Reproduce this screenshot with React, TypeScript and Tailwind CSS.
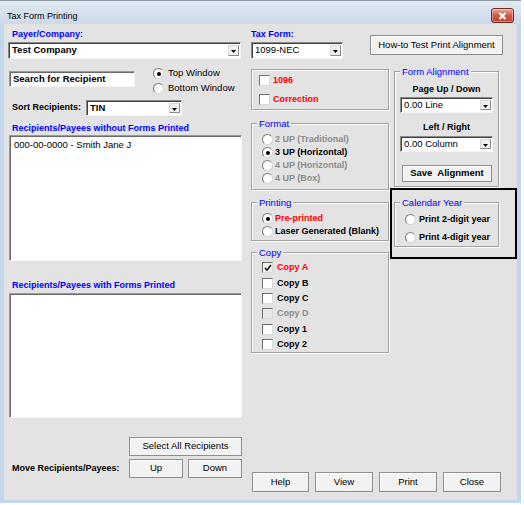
import React from 'react';

type Kids = { children?: React.ReactNode; className?: string };

function Combo({ text, bold, className }: { text: string; bold?: boolean; className?: string }) {
  return (
    <div
      className={`flex items-stretch border border-[#8a8a8a] border-b-[#f4f4f4] border-r-[#f4f4f4] bg-white shadow-[inset_1px_1px_0_#404040] ${className ?? ''}`}
    >
      <div className={`flex flex-1 items-center pl-[3px] text-[9.5px] ${bold ? 'font-bold' : ''}`}>{text}</div>
      <div className="my-[2px] mr-[1px] flex w-[11px] items-center justify-center border border-[#d8d8d8] border-b-[#8a8a8a] border-r-[#8a8a8a] bg-[#f0f0f0]">
        <svg width="5" height="3" viewBox="0 0 5 3" className="mt-[2px]">
          <path d="M0 0h5L2.5 3z" fill="#000" />
        </svg>
      </div>
    </div>
  );
}

function Btn({ children, className }: Kids) {
  return (
    <div
      className={`flex items-center justify-center border border-[#8e8e8e] bg-[#f2f2f2] text-[9.5px] shadow-[inset_1px_1px_0_#fff] ${className ?? ''}`}
    >
      {children}
    </div>
  );
}

function Group({ title, children, className }: Kids & { title?: string }) {
  return (
    <div className={`relative border border-[#a0a0a0] shadow-[inset_1px_1px_0_#fff,1px_1px_0_#fff] ${className ?? ''}`}>
      {title && (
        <span className="absolute left-[5px] top-[-7px] bg-[#e3e3e3] px-[2px] text-[9.5px] leading-[13px] text-[#0000ff]">
          {title}
        </span>
      )}
      {children}
    </div>
  );
}

function Radio({ on }: { on?: boolean }) {
  return (
    <span className="flex h-[11px] w-[11px] shrink-0 items-center justify-center rounded-full border border-[#7c7c7c] border-b-[#d4d4d4] border-r-[#d4d4d4] bg-white">
      {on && <span className="h-[4px] w-[4px] rounded-full bg-black" />}
    </span>
  );
}

function Check({ on, disabled }: { on?: boolean; disabled?: boolean }) {
  return (
    <span
      className={`flex h-[11px] w-[11px] shrink-0 items-center justify-center border border-[#707070] border-b-[#dadada] border-r-[#dadada] ${disabled ? 'bg-[#e8e8e8]' : on ? 'bg-[#f0f0f0]' : 'bg-white'}`}
    >
      {on && (
        <svg width="8" height="8" viewBox="0 0 8 8">
          <path d="M1 4l2 2.2L7 1" stroke="#000" strokeWidth="1.4" fill="none" />
        </svg>
      )}
    </span>
  );
}

function Sunken({ children, className }: Kids) {
  return (
    <div className={`border border-[#9a9a9a] border-b-[#f6f6f6] border-r-[#f6f6f6] bg-white shadow-[inset_1px_1px_0_#6a6a6a] ${className ?? ''}`}>
      {children}
    </div>
  );
}

export default function App() {
  const label = 'text-[9px] font-bold leading-[13px] text-[#0000ff]';
  return (
    <div className="h-[505px] w-[524px] bg-white font-['Liberation_Sans',Arial,sans-serif] text-black">
      <div className="flex h-[503px] w-[521px] flex-col border-t border-[#8d99a6] bg-[#c3d6eb]">
        {/* title bar */}
        <div className="flex h-[23px] items-start bg-gradient-to-b from-[#e2e9f1] to-[#cbd9ea]">
          <span className="ml-[7px] mt-[9px] text-[9px] leading-[12px]">Tax Form Printing</span>
          <div className="ml-auto mr-[7px] mt-[7px] flex h-[15px] w-[23px] items-center justify-center rounded-[3px] border border-[#6b2d25] bg-gradient-to-b from-[#e8a999] via-[#cf5a45] to-[#c0432f] shadow-[inset_0_0_0_1px_rgba(255,255,255,0.35)]">
            <svg width="9" height="8" viewBox="0 0 9 8">
              <path d="M1.5 1l6 6M7.5 1l-6 6" stroke="#fff" strokeWidth="2.2" />
            </svg>
          </div>
        </div>

        {/* client */}
        <div className="mx-[4px] mb-[3px] flex flex-1 bg-[#e3e3e3] pl-[4px]">
          {/* left column */}
          <div className="flex w-[234px] flex-col">
            <div className={`mt-[4px] pl-[4px] ${label}`}>Payer/Company:</div>
            <Combo text="Test Company" bold className="mt-[1px] h-[17px] w-[233px]" />

            <div className="mt-[7px] flex items-start">
              <Sunken className="ml-[1px] mt-[5px] flex h-[16px] w-[126px] items-center pl-[3px] text-[9.5px] font-bold">
                Search for Recipient
              </Sunken>
              <div className="ml-[18px] flex flex-col text-[9.5px]">
                <div className="flex h-[15px] items-center gap-[4px]">
                  <Radio on />
                  <span>Top Window</span>
                </div>
                <div className="flex h-[15px] items-center gap-[4px]">
                  <Radio />
                  <span>Bottom Window</span>
                </div>
              </div>
            </div>

            <div className="mt-[4px] flex h-[16px] items-center">
              <span className="w-[78px] pl-[4px] text-[9px] font-bold">Sort Recipients:</span>
              <Combo text="TIN" bold className="h-[16px] w-[96px]" />
            </div>

            <div className={`mt-[6px] pl-[4px] ${label}`}>Recipients/Payees without Forms Printed</div>
            <Sunken className="ml-[1px] h-[126px] w-[233px] pl-[4px] pt-[2px] text-[9.5px] leading-[13px]">
              000-00-0000 - Smith Jane J
            </Sunken>

            <div className={`mt-[18px] pl-[4px] ${label}`}>Recipients/Payees with Forms Printed</div>
            <Sunken className="ml-[1px] mt-[1px] h-[125px] w-[233px]" />

            <Btn className="mt-[19px] h-[19px] w-[113px] self-end">Select All Recipients</Btn>
            <div className="mt-[3px] flex h-[19px] items-center">
              <span className="pl-[4px] text-[9px] font-bold">Move Recipients/Payees:</span>
              <Btn className="ml-auto h-[19px] w-[54px]">Up</Btn>
              <Btn className="ml-[5px] h-[19px] w-[54px]">Down</Btn>
            </div>
          </div>

          {/* right part */}
          <div className="ml-[9px] flex w-[266px] flex-col">
            <div className="flex items-start">
              <div className="flex w-[92px] flex-col">
                <div className={`mt-[4px] ${label}`}>Tax Form:</div>
                <Combo text="1099-NEC" className="mt-[1px] h-[17px] w-[92px]" />
              </div>
              <Btn className="ml-[27px] mt-[11px] h-[20px] w-[133px]">How-to Test Print Alignment</Btn>
            </div>

            <div className="mt-[10px] flex items-start">
              {/* middle column */}
              <div className="flex w-[138px] flex-col">
                <Group className="h-[41px] pl-[7px] pt-[4px]">
                  <div className="flex flex-col gap-[6px] text-[9px] font-bold leading-[13px] text-[#ff0000]">
                    <div className="flex items-center gap-[3px]">
                      <Check />
                      <span>1096</span>
                    </div>
                    <div className="flex items-center gap-[3px]">
                      <Check />
                      <span>Correction</span>
                    </div>
                  </div>
                </Group>

                <Group title="Format" className="mt-[13px] h-[67px] pl-[10px] pt-[9px]">
                  <div className="flex flex-col text-[9px] font-bold leading-[13px]">
                    <div className="flex h-[13px] items-center gap-[2px] text-[#8c8c8c]">
                      <Radio />
                      <span>2 UP (Traditional)</span>
                    </div>
                    <div className="flex h-[13px] items-center gap-[2px]">
                      <Radio on />
                      <span>3 UP (Horizontal)</span>
                    </div>
                    <div className="flex h-[13px] items-center gap-[2px] text-[#8c8c8c]">
                      <Radio />
                      <span>4 UP (Horizontal)</span>
                    </div>
                    <div className="flex h-[13px] items-center gap-[2px] text-[#8c8c8c]">
                      <Radio />
                      <span>4 UP (Box)</span>
                    </div>
                  </div>
                </Group>

                <Group title="Printing" className="mt-[12px] h-[39px] pl-[10px] pt-[9px]">
                  <div className="flex flex-col text-[9px] font-bold leading-[13px]">
                    <div className="flex h-[13px] items-center gap-[2px] text-[#ff0000]">
                      <Radio on />
                      <span>Pre-printed</span>
                    </div>
                    <div className="flex h-[13px] items-center gap-[2px]">
                      <Radio />
                      <span>Laser Generated (Blank)</span>
                    </div>
                  </div>
                </Group>

                <Group title="Copy" className="mt-[11px] h-[101px] pl-[10px] pt-[7px]">
                  <div className="flex flex-col text-[9px] font-bold leading-[13px]">
                    <div className="flex h-[15.4px] items-center gap-[4px] text-[#ff0000]">
                      <Check on />
                      <span>Copy A</span>
                    </div>
                    <div className="flex h-[15.4px] items-center gap-[4px]">
                      <Check />
                      <span>Copy B</span>
                    </div>
                    <div className="flex h-[15.4px] items-center gap-[4px]">
                      <Check />
                      <span>Copy C</span>
                    </div>
                    <div className="flex h-[15.4px] items-center gap-[4px] text-[#8c8c8c]">
                      <Check disabled />
                      <span>Copy D</span>
                    </div>
                    <div className="flex h-[15.4px] items-center gap-[4px]">
                      <Check />
                      <span>Copy 1</span>
                    </div>
                    <div className="flex h-[15.4px] items-center gap-[4px]">
                      <Check />
                      <span>Copy 2</span>
                    </div>
                  </div>
                </Group>
              </div>

              {/* right column */}
              <div className="ml-[1px] flex w-[127px] flex-col">
                <Group title="Form Alignment" className="ml-[4px] mt-[2px] flex h-[116px] w-[105px] flex-col">
                  <div className="mt-[11px] text-center text-[9px] font-bold leading-[13px]">Page Up / Down</div>
                  <Combo text="0.00 Line" className="ml-[5px] mt-[1px] h-[16px] w-[93px]" />
                  <div className="mt-[8px] text-center text-[9px] font-bold leading-[13px]">Left / Right</div>
                  <Combo text="0.00 Column" className="ml-[5px] mt-[2px] h-[16px] w-[93px]" />
                  <Btn className="ml-[7px] mt-[13px] h-[17px] w-[90px] font-bold">Save&nbsp; Alignment</Btn>
                </Group>

                <div className="mt-[1px] h-[71px] w-[127px] border-2 border-black">
                  <Group title="Calendar Year" className="ml-[2px] mt-[12px] h-[45px] w-[105px] pl-[10px] pt-[10px]">
                    <div className="flex flex-col gap-[5px] text-[9px] font-bold leading-[13px]">
                      <div className="flex h-[13px] items-center gap-[3px]">
                        <Radio />
                        <span>Print 2-digit year</span>
                      </div>
                      <div className="flex h-[13px] items-center gap-[3px]">
                        <Radio />
                        <span>Print 4-digit year</span>
                      </div>
                    </div>
                  </Group>
                </div>
              </div>
            </div>

            <div className="mb-[8px] ml-[1px] mt-auto flex gap-[6px]">
              <Btn className="h-[20px] w-[57px]">Help</Btn>
              <Btn className="h-[20px] w-[58px]">View</Btn>
              <Btn className="h-[20px] w-[58px]">Print</Btn>
              <Btn className="h-[20px] w-[58px]">Close</Btn>
            </div>
          </div>
        </div>
      </div>
    </div>
  );
}
